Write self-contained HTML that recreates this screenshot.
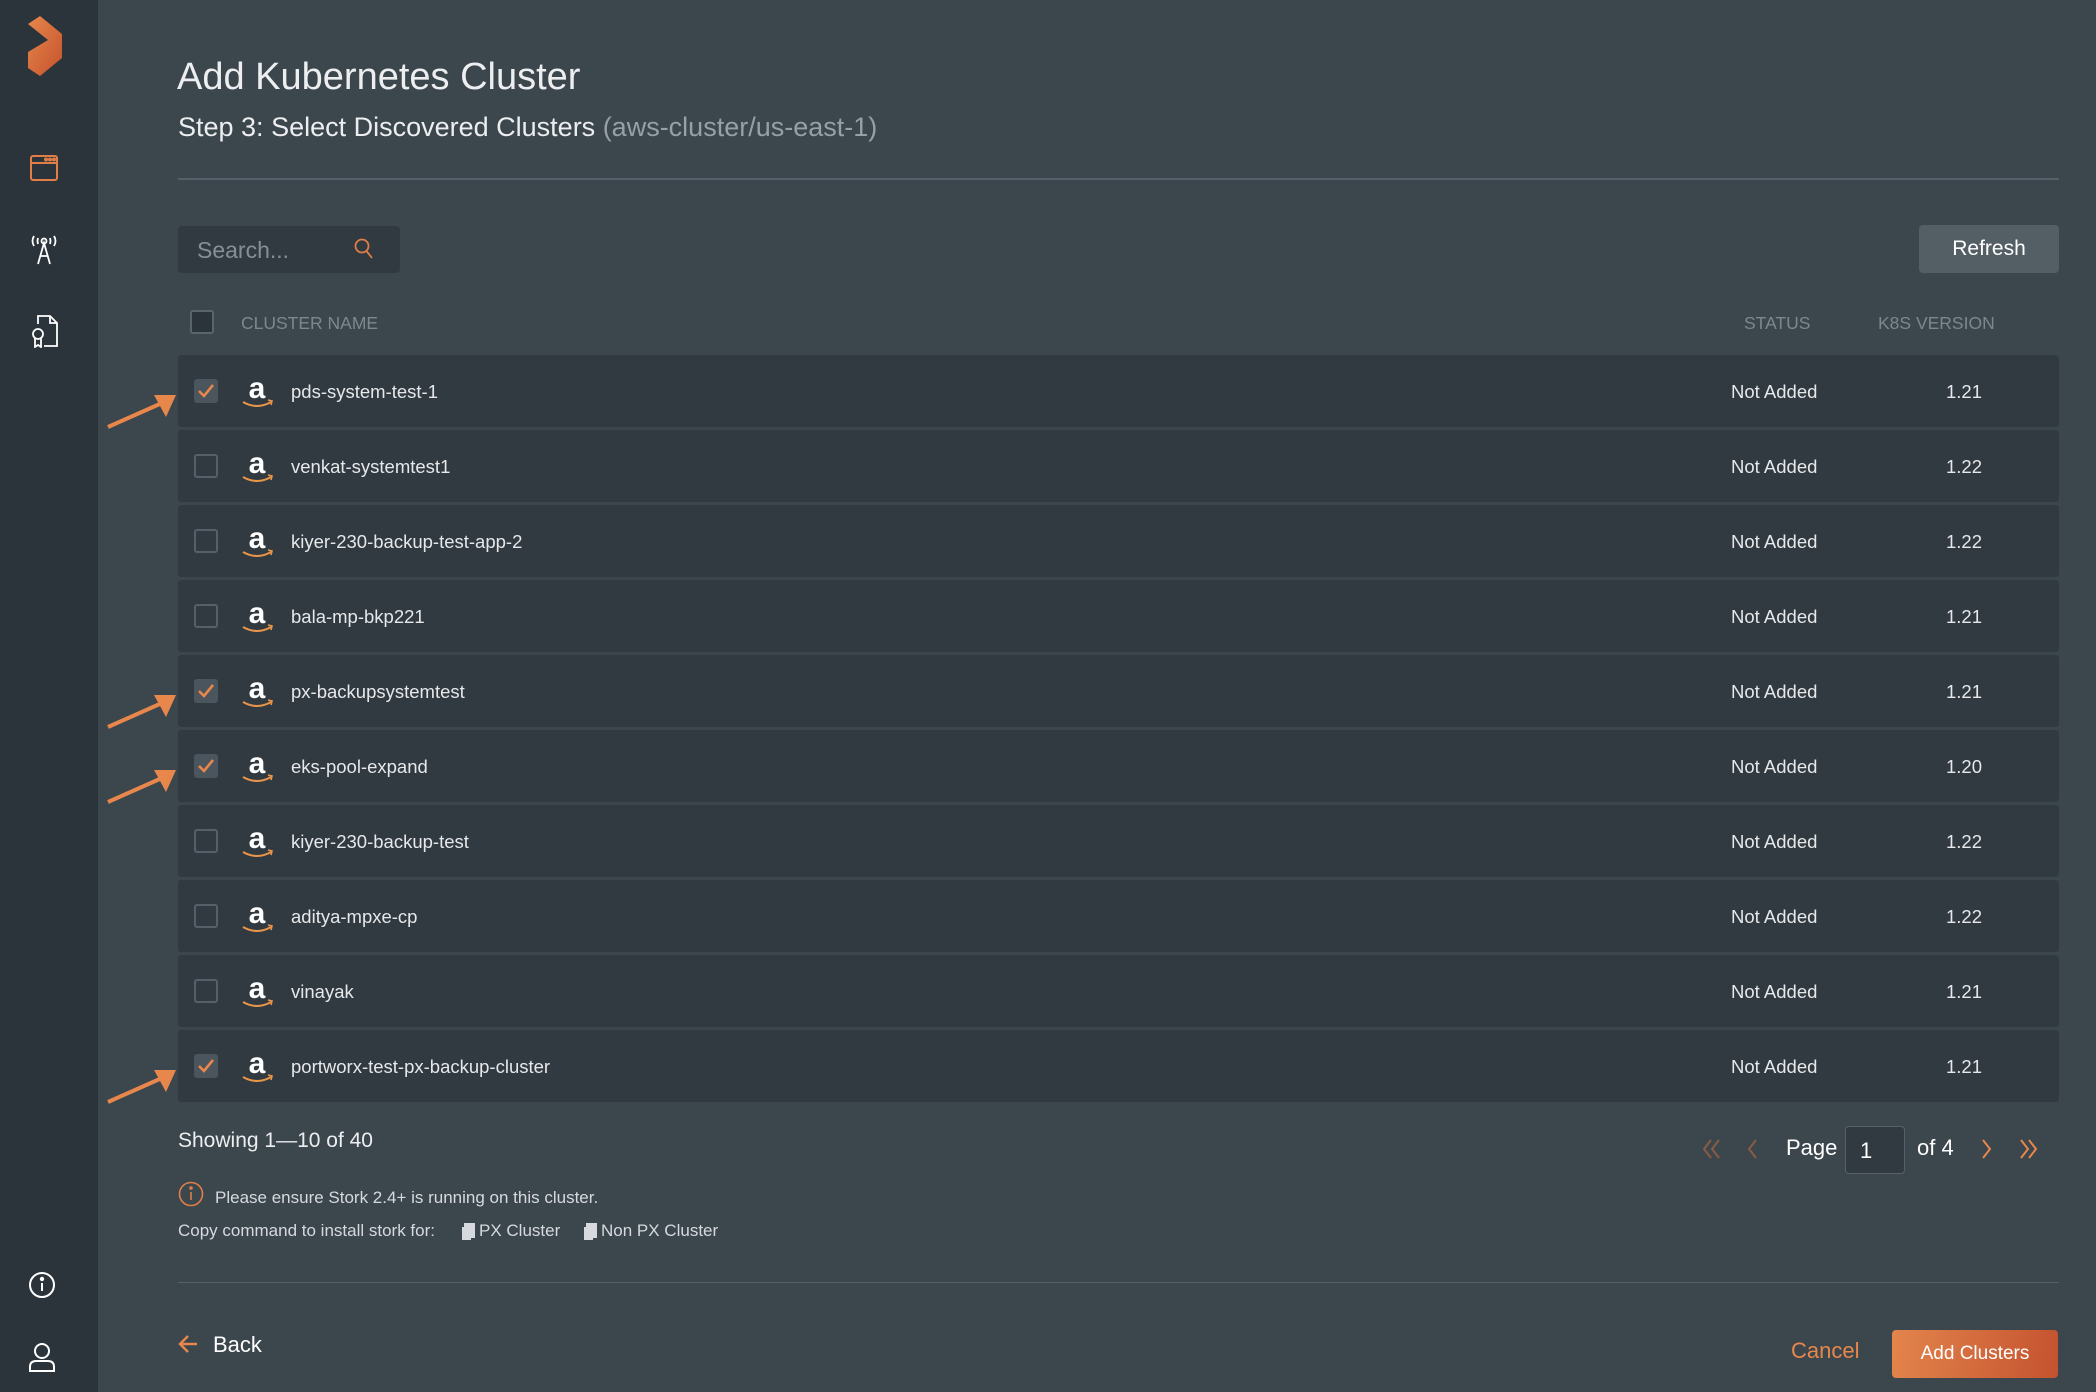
<!DOCTYPE html>
<html><head><meta charset="utf-8"><style>
*{margin:0;padding:0;box-sizing:border-box}
body{width:2096px;height:1392px;background:#3c464d;font-family:"Liberation Sans",sans-serif;color:#e8eaec;position:relative;overflow:hidden}
.side{position:absolute;left:0;top:0;width:98px;height:1392px;background:#2b343a}
.abs{position:absolute}
.row{position:absolute;left:178px;width:1881px;height:72px;background:#313a41;border-radius:3px}
.cb{position:absolute;left:16px;top:24px;width:24px;height:24px;border:2px solid #56606a;border-radius:3px;background:#313a41}
.cb.on{background:#4b555d;border-color:#4b555d}
.nm{position:absolute;left:113px;top:26px;font-size:18.5px;color:#e6e8ea}
.st{position:absolute;left:1553px;top:26px;font-size:18.5px;color:#e6e8ea}
.vr{position:absolute;left:1768px;top:26px;font-size:18.5px;color:#e6e8ea}
.logo{position:absolute;left:62px;top:16px;width:34px;height:40px}
.hdr{font-size:17.5px;color:#7d878f;position:absolute;top:313px}
</style></head><body>
<div class="side">
<svg class="abs" style="left:24px;top:12px" width="40" height="68" viewBox="0 0 40 68"><defs><linearGradient id="g" x1="0" y1="0" x2="1" y2="1"><stop offset="0" stop-color="#e8874c"/><stop offset="1" stop-color="#c4522c"/></linearGradient></defs><path d="M4 12 L16 4 L38 22 L38 46 L16 64 L4 56 L4 40 L24 28 Z" fill="url(#g)"/></svg>
<svg class="abs" style="left:30px;top:155px" width="28" height="26" viewBox="0 0 28 26" fill="none" stroke="#e17e48" stroke-width="2"><rect x="1" y="1" width="26" height="24" rx="2"/><line x1="1" y1="8" x2="27" y2="8"/><circle cx="16" cy="4.5" r="1" fill="#e17e48"/><circle cx="20" cy="4.5" r="1" fill="#e17e48"/><circle cx="24" cy="4.5" r="1" fill="#e17e48"/></svg>
<svg class="abs" style="left:28px;top:234px" width="32" height="32" viewBox="0 0 32 32" fill="none" stroke="#fff" stroke-width="1.8"><circle cx="16" cy="7" r="2.5"/><path d="M10 30 L16 9 L22 30 M12.5 22 H19.5"/><path d="M6 2 Q3 7 6 12 M26 2 Q29 7 26 12 M10 4 Q9 7 10 10 M22 4 Q23 7 22 10"/></svg>
<svg class="abs" style="left:30px;top:314px" width="30" height="34" viewBox="0 0 30 34" fill="none" stroke="#fff" stroke-width="1.8"><path d="M8 10 V2 H20 L27 9 V32 H14"/><path d="M20 2 V9 H27"/><circle cx="8" cy="20" r="5"/><path d="M5 24 V33 L8 31 L11 33 V24"/></svg>
<svg class="abs" style="left:28px;top:1271px" width="28" height="28" viewBox="0 0 28 28" fill="none" stroke="#fff" stroke-width="2"><circle cx="14" cy="14" r="12"/><line x1="14" y1="12" x2="14" y2="20"/><circle cx="14" cy="8" r="1.2" fill="#fff"/></svg>
<svg class="abs" style="left:28px;top:1342px" width="28" height="30" viewBox="0 0 28 30" fill="none" stroke="#fff" stroke-width="2"><circle cx="14" cy="9" r="7"/><path d="M2 29 V25 Q2 19 8 19 H20 Q26 19 26 25 V29 Z"/></svg>
</div>

<div class="abs" style="left:177px;top:56px;font-size:38px;font-weight:300;color:#eceef0">Add Kubernetes Cluster</div>
<div class="abs" style="left:178px;top:112px;font-size:27px;color:#eceef0">Step 3: Select Discovered Clusters <span style="color:#97a0a7">(aws-cluster/us-east-1)</span></div>
<div class="abs" style="left:178px;top:178px;width:1881px;height:2px;background:#56606a"></div>

<div class="abs" style="left:178px;top:226px;width:222px;height:47px;background:#313a41;border-radius:4px"></div>
<div class="abs" style="left:197px;top:237px;font-size:23px;color:#868f96">Search...</div>
<svg class="abs" style="left:354px;top:238px" width="20" height="22" viewBox="0 0 20 22" fill="none" stroke="#e17e48" stroke-width="1.8"><circle cx="8" cy="8" r="6.5"/><line x1="12.5" y1="13" x2="18" y2="20"/></svg>
<div class="abs" style="left:1919px;top:225px;width:140px;height:48px;background:#545e65;border-radius:4px;font-size:21px;color:#fff;text-align:center;line-height:48px">Refresh</div>

<div class="abs" style="left:190px;top:310px;width:24px;height:24px;border:2px solid #5a646c;border-radius:3px;background:#2b343a"></div>
<div class="hdr" style="left:241px">CLUSTER NAME</div>
<div class="hdr" style="left:1744px">STATUS</div>
<div class="hdr" style="left:1878px">K8S VERSION</div>

<div id="rows"></div>
<script>
var d=[["pds-system-test-1","1.21",1],["venkat-systemtest1","1.22",0],["kiyer-230-backup-test-app-2","1.22",0],["bala-mp-bkp221","1.21",0],["px-backupsystemtest","1.21",1],["eks-pool-expand","1.20",1],["kiyer-230-backup-test","1.22",0],["aditya-mpxe-cp","1.22",0],["vinayak","1.21",0],["portworx-test-px-backup-cluster","1.21",1]];
var h="";
d.forEach(function(r,i){var t=355+i*75;
h+='<div class="row" style="top:'+t+'px"><div class="cb'+(r[2]?' on':'')+'">'+(r[2]?'<svg width="20" height="20" viewBox="0 0 20 20" style="position:absolute;left:0;top:0" fill="none" stroke="#e8874c" stroke-width="2.6"><path d="M3 10 L8 15 L17 4"/></svg>':'')+'</div>'+
'<svg class="logo" viewBox="0 0 34 40"><text x="17" y="27" text-anchor="middle" font-family="Liberation Sans" font-weight="bold" font-size="30" fill="#fff">a</text><path d="M3 31 Q17 39 31 31" fill="none" stroke="#e8954a" stroke-width="2"/><path d="M28 29 L32 30 L31 34" fill="none" stroke="#e8954a" stroke-width="1.6"/></svg>'+
'<div class="nm">'+r[0]+'</div><div class="st">Not Added</div><div class="vr">'+r[1]+'</div></div>';
if(r[2]){h+='<svg class="abs" style="left:104px;top:'+(t+36)+'px" width="76" height="40" viewBox="0 0 76 40"><path d="M4 36 L58 12" stroke="#e8874c" stroke-width="4"/><path d="M72 4 L50 4 L62 26 Z" fill="#e8874c"/></svg>';}
});
document.getElementById("rows").innerHTML=h;
</script>

<div class="abs" style="left:178px;top:1129px;font-size:21px;color:#eceef0">Showing 1—10 of 40</div>
<svg class="abs" style="left:1702px;top:1138px" width="20" height="22" viewBox="0 0 20 22" fill="none" stroke="#8a5c44" stroke-width="2"><path d="M9 2 L2 11 L9 20 M17 2 L10 11 L17 20"/></svg>
<svg class="abs" style="left:1746px;top:1138px" width="12" height="22" viewBox="0 0 12 22" fill="none" stroke="#8a5c44" stroke-width="2"><path d="M10 2 L3 11 L10 20"/></svg>
<div class="abs" style="left:1786px;top:1135px;font-size:22px;color:#fff">Page</div>
<div class="abs" style="left:1845px;top:1126px;width:60px;height:48px;border:1px solid #56606a;border-radius:4px;background:#313a41;font-size:22px;color:#fff;padding:11px 0 0 14px">1</div>
<div class="abs" style="left:1917px;top:1135px;font-size:22px;color:#fff">of 4</div>
<svg class="abs" style="left:1981px;top:1138px" width="12" height="22" viewBox="0 0 12 22" fill="none" stroke="#e8874c" stroke-width="2"><path d="M2 2 L9 11 L2 20"/></svg>
<svg class="abs" style="left:2019px;top:1138px" width="20" height="22" viewBox="0 0 20 22" fill="none" stroke="#e8874c" stroke-width="2"><path d="M2 2 L9 11 L2 20 M10 2 L17 11 L10 20"/></svg>

<svg class="abs" style="left:178px;top:1181px" width="26" height="26" viewBox="0 0 26 26" fill="none" stroke="#e17e48" stroke-width="1.6"><circle cx="13" cy="13" r="11.5"/><line x1="13" y1="11" x2="13" y2="19"/><circle cx="13" cy="7" r="1" fill="#e17e48"/></svg>
<div class="abs" style="left:215px;top:1188px;font-size:17px;color:#d6dade">Please ensure Stork 2.4+ is running on this cluster.</div>
<div class="abs" style="left:178px;top:1221px;font-size:17px;color:#d6dade">Copy command to install stork for:</div>
<div class="abs" style="left:464px;top:1221px;font-size:17px;color:#d6dade"><span style="display:inline-block;width:11px;height:15px;background:#d6dade;margin-right:4px;vertical-align:-2px;box-shadow:-3px 3px 0 -1px #d6dade"></span>PX Cluster</div>
<div class="abs" style="left:586px;top:1221px;font-size:17px;color:#d6dade"><span style="display:inline-block;width:11px;height:15px;background:#d6dade;margin-right:4px;vertical-align:-2px;box-shadow:-3px 3px 0 -1px #d6dade"></span>Non PX Cluster</div>
<div class="abs" style="left:178px;top:1282px;width:1881px;height:1px;background:#56606a"></div>

<svg class="abs" style="left:178px;top:1334px" width="20" height="20" viewBox="0 0 20 20" fill="none" stroke="#e8874c" stroke-width="2.4"><path d="M10 2 L2 10 L10 18 M2 10 H19"/></svg>
<div class="abs" style="left:213px;top:1332px;font-size:22px;color:#fff">Back</div>
<div class="abs" style="left:1791px;top:1338px;font-size:22px;color:#e8874c">Cancel</div>
<div class="abs" style="left:1892px;top:1330px;width:166px;height:48px;border-radius:4px;background:linear-gradient(100deg,#e3854c,#c4522f);font-size:19px;color:#fff;text-align:center;line-height:48px">Add Clusters</div>
</body></html>
